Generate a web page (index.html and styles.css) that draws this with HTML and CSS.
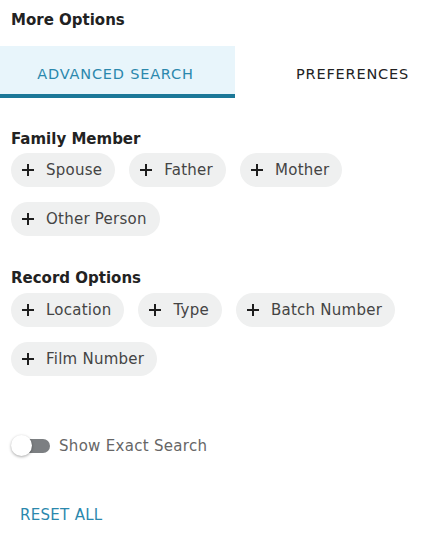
FILE: index.html
```html
<!DOCTYPE html>
<html>
<head>
<meta charset="utf-8">
<link rel="stylesheet" href="styles.css">
</head>
<body>
<div class="page">
  <div class="title">More Options</div>
  <div class="tabs">
    <div class="tab active">ADVANCED SEARCH</div>
    <div class="tab">PREFERENCES</div>
  </div>
  <div class="content">
    <div class="section">
      <div class="heading">Family Member</div>
      <div class="chips">
        <div class="chip"><svg class="plus" viewBox="0 0 14 14"><path d="M7 1v12M1 7h12"/></svg><span>Spouse</span></div>
        <div class="chip"><svg class="plus" viewBox="0 0 14 14"><path d="M7 1v12M1 7h12"/></svg><span>Father</span></div>
        <div class="chip"><svg class="plus" viewBox="0 0 14 14"><path d="M7 1v12M1 7h12"/></svg><span>Mother</span></div>
        <div class="chip"><svg class="plus" viewBox="0 0 14 14"><path d="M7 1v12M1 7h12"/></svg><span>Other Person</span></div>
      </div>
    </div>
    <div class="section second">
      <div class="heading">Record Options</div>
      <div class="chips">
        <div class="chip"><svg class="plus" viewBox="0 0 14 14"><path d="M7 1v12M1 7h12"/></svg><span>Location</span></div>
        <div class="chip"><svg class="plus" viewBox="0 0 14 14"><path d="M7 1v12M1 7h12"/></svg><span>Type</span></div>
        <div class="chip"><svg class="plus" viewBox="0 0 14 14"><path d="M7 1v12M1 7h12"/></svg><span>Batch Number</span></div>
        <div class="chip"><svg class="plus" viewBox="0 0 14 14"><path d="M7 1v12M1 7h12"/></svg><span>Film Number</span></div>
      </div>
    </div>
    <div class="toggle-row">
      <div class="switch"><div class="track"></div><div class="knob"></div></div>
      <span class="toggle-label">Show Exact Search</span>
    </div>
    <div class="reset">RESET ALL</div>
  </div>
</div>
</body>
</html>
```
FILE: styles.css
```css
html, body {
  margin: 0;
  padding: 0;
  background: #ffffff;
}
body {
  font-family: "DejaVu Sans", Verdana, sans-serif;
  color: #333333;
  overflow: hidden;
}
.page {
  width: 425px;
}
.title {
  font-size: 15px;
  font-weight: bold;
  line-height: 18px;
  color: #222222;
  padding: 11px 11px 17px;
}
.tabs {
  display: flex;
  overflow: hidden;
  width: 425px;
}
.tab {
  flex: 0 0 235px;
  height: 41px;
  padding-top: 7px;
  display: flex;
  align-items: center;
  justify-content: center;
  font-size: 14.5px;
  letter-spacing: 0.8px;
  color: #222222;
  border-bottom: 4px solid transparent;
  box-sizing: content-box;
}
.tab.active {
  background: #e8f5fb;
  color: #2b88ad;
  border-bottom-color: #1b7898;
  padding-right: 4px;
  flex-basis: 231px;
}
.content {
  padding: 0 11px;
}
.section {
  padding-top: 32px;
}
.section.second {
  padding-top: 33px;
}
.heading {
  font-size: 15px;
  font-weight: bold;
  line-height: 18px;
  color: #222222;
  margin-bottom: 5px;
}
.second .heading {
  margin-bottom: 6px;
}
.chips {
  display: flex;
  flex-wrap: wrap;
  column-gap: 14px;
  row-gap: 15px;
}
.chip {
  display: flex;
  align-items: center;
  gap: 11px;
  height: 34px;
  padding: 0 13px 0 10px;
  border-radius: 17px;
  background: #eff0f0;
  font-size: 15px;
  letter-spacing: 0.25px;
  color: #444444;
  box-sizing: border-box;
}
.plus {
  width: 14px;
  height: 14px;
  flex: none;
}
.plus path {
  stroke: #1e1e1e;
  stroke-width: 2;
  fill: none;
}
.toggle-row {
  display: flex;
  align-items: center;
  gap: 8px;
  margin-top: 59px;
  height: 22px;
}
.switch {
  position: relative;
  width: 40px;
  height: 22px;
  flex: none;
}
.track {
  position: absolute;
  left: 3px;
  top: 4px;
  width: 36px;
  height: 14px;
  border-radius: 7px;
  background: #7c7f82;
}
.knob {
  position: absolute;
  left: 0;
  top: 0;
  width: 21px;
  height: 21px;
  border-radius: 50%;
  background: #ffffff;
  box-shadow: 0 1px 3px rgba(0,0,0,0.35);
}
.toggle-label {
  font-size: 15px;
  letter-spacing: 0.3px;
  color: #666666;
}
.reset {
  margin-top: 49px;
  padding-left: 9px;
  font-size: 15px;
  letter-spacing: 0.3px;
  color: #2b88ad;
}
```
